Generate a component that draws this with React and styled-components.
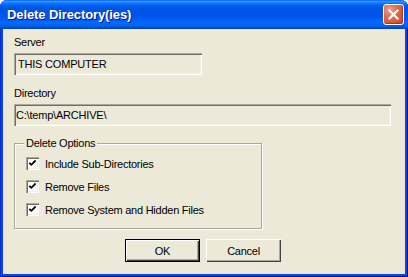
import React from "react";
import styled, { createGlobalStyle } from "styled-components";

const Global = createGlobalStyle`
  html, body { margin: 0; padding: 0; background: #ffffff; }
  body { width: 408px; height: 277px; overflow: hidden; }
  * { box-sizing: border-box; }
`;

const Window = styled.div`
  width: 408px;
  height: 277px;
  display: flex;
  flex-direction: column;
  border-radius: 7px 7px 0 0;
  overflow: hidden;
  background: #0a45dc;
  box-shadow: inset -1px -1px 0 #00138c, inset 1px 0 0 #0831d9;
  font-family: "Liberation Sans", Arial, sans-serif;
`;

const TitleBar = styled.div`
  height: 29px;
  flex: none;
  display: flex;
  align-items: center;
  justify-content: space-between;
  padding: 0 4px 1px 7px;
  background: linear-gradient(
    to bottom,
    #0058ee 0%,
    #3593ff 4%,
    #288eff 7%,
    #127dff 10%,
    #036ffc 14%,
    #0262ee 18%,
    #0057e5 24%,
    #0054e3 30%,
    #0055eb 56%,
    #005bf5 66%,
    #026afe 78%,
    #0062ef 88%,
    #0052d6 94%,
    #0040ab 100%
  );
`;

const Title = styled.span`
  color: #ffffff;
  font-weight: bold;
  font-size: 13px;
  letter-spacing: -0.1px;
  text-shadow: 1px 1px 0 #0a1883;
`;

const CloseButton = styled.div`
  width: 21px;
  height: 21px;
  border: 1px solid #ffffff;
  border-radius: 3px;
  display: flex;
  align-items: center;
  justify-content: center;
  background: radial-gradient(circle at 30% 25%, #f0a088 0%, #e06a48 40%, #cc4520 100%);
  box-shadow: inset -1px -1px 1px rgba(120, 20, 0, 0.5);
`;

const Client = styled.div`
  flex: 1;
  margin: 0 3px 3px 3px;
  background: #ece9d8;
  padding: 7px 0 0 11px;
  display: flex;
  flex-direction: column;
  font-size: 11px;
  letter-spacing: -0.25px;
  color: #000000;
`;

const Label = styled.div`
  line-height: 13px;
  height: 13px;
`;

const Field = styled.div`
  margin-top: 4px;
  width: ${(p) => p.$width}px;
  height: 22px;
  padding: 2px ${(p) => p.$pad + 2}px;
  display: flex;
  align-items: center;
  background: #ece9d8;
  box-shadow: inset 1px 1px 0 #aca899, inset 2px 2px 0 #716f64,
    inset -1px -1px 0 #ffffff, inset -2px -2px 0 #f1efe2;
  font-size: 11px;
  letter-spacing: -0.2px;
  white-space: nowrap;
`;

const Spacer = styled.div`
  height: ${(p) => p.$h}px;
  flex: none;
`;

const Group = styled.div`
  position: relative;
  width: 248px;
  border: 1px solid #aca899;
  box-shadow: inset 1px 1px 0 #ffffff, 1px 1px 0 #ffffff;
  padding: 8px 0 7px 11px;
  display: flex;
  flex-direction: column;
`;

const Legend = styled.span`
  position: absolute;
  top: -8px;
  left: 9px;
  padding: 0 2px;
  background: #ece9d8;
  line-height: 14px;
`;

const Row = styled.label`
  height: 23px;
  display: flex;
  align-items: center;
  gap: 6px;
`;

const Box = styled.span`
  width: 13px;
  height: 13px;
  flex: none;
  background: #ffffff;
  display: flex;
  align-items: center;
  justify-content: center;
  box-shadow: inset 1px 1px 0 #aca899, inset 2px 2px 0 #716f64,
    inset -1px -1px 0 #ffffff, inset -2px -2px 0 #f1efe2;
`;

const Buttons = styled.div`
  margin-top: 10px;
  padding-left: 111px;
  display: flex;
  gap: 6px;
`;

const Button = styled.div`
  width: 75px;
  height: 23px;
  display: flex;
  align-items: center;
  justify-content: center;
  background: #ece9d8;
  border: ${(p) => (p.$default ? "1px solid #000000" : "none")};
  box-shadow: inset 1px 1px 0 #ffffff, inset -1px -1px 0 #404040,
    inset -2px -2px 0 #aca899;
`;

const Check = () => (
  <svg width="9" height="9" viewBox="0 0 9 9">
    <polyline points="1.3,3.8 3.3,5.8 7.6,1.5" fill="none" stroke="#000" strokeWidth="1.8" />
  </svg>
);

const CloseX = () => (
  <svg width="11" height="11" viewBox="0 0 11 11">
    <path d="M1.5 1.5 L9.5 9.5 M9.5 1.5 L1.5 9.5" stroke="#fff" strokeWidth="2.2" strokeLinecap="square" />
  </svg>
);

const options = [
  "Include Sub-Directories",
  "Remove Files",
  "Remove System and Hidden Files",
];

export default function App() {
  return (
    <>
      <Global />
      <Window>
        <TitleBar>
          <Title>Delete Directory(ies)</Title>
          <CloseButton>
            <CloseX />
          </CloseButton>
        </TitleBar>
        <Client>
          <Label>Server</Label>
          <Field $width={188} $pad={2}>THIS COMPUTER</Field>
          <Spacer $h={12} />
          <Label>Directory</Label>
          <Field $width={377} $pad={0}>C:\temp\ARCHIVE\</Field>
          <Spacer $h={17} />
          <Group>
            <Legend>Delete Options</Legend>
            {options.map((o) => (
              <Row key={o}>
                <Box>
                  <Check />
                </Box>
                {o}
              </Row>
            ))}
          </Group>
          <Buttons>
            <Button $default>OK</Button>
            <Button>Cancel</Button>
          </Buttons>
        </Client>
      </Window>
    </>
  );
}
